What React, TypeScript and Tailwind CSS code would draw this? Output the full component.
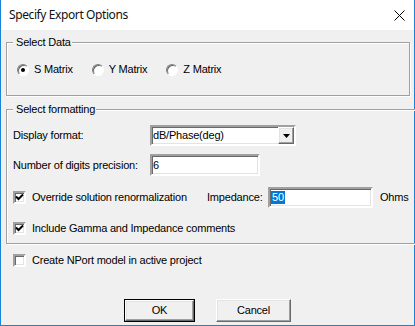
import React from 'react';

const sunken =
  'border-2 border-t-[#a0a0a0] border-l-[#a0a0a0] border-b-white border-r-white shadow-[inset_1px_1px_0_#696969,inset_-1px_-1px_0_#e3e3e3]';
const raised =
  'border border-t-white border-l-white border-b-[#696969] border-r-[#696969] shadow-[inset_-1px_-1px_0_#a0a0a0,inset_1px_1px_0_#e3e3e3]';
const groupClass =
  'mx-[5px] w-[404px] border border-[#a0a0a0] shadow-[inset_1px_1px_0_#fff,1px_1px_0_#fff] px-[6px]';
const legendClass = 'pl-[3px] pr-[1px] leading-[13px] bg-[#f0f0f0]';

function Radio({ label, checked }: { label: string; checked?: boolean }) {
  return (
    <label className="flex items-center gap-[5px] h-[13px]">
      <span className="w-[12px] h-[12px] rounded-full border-[1.5px] border-t-[#808080] border-l-[#808080] border-b-white border-r-white bg-white shadow-[inset_1px_1px_0_#696969] flex items-center justify-center">
        {checked && <span className="w-[4px] h-[4px] rounded-full bg-black" />}
      </span>
      <span>{label}</span>
    </label>
  );
}

function Check({ checked }: { checked?: boolean }) {
  return (
    <span className={`w-[13px] h-[13px] shrink-0 bg-white ${sunken} flex items-center justify-center`}>
      {checked && (
        <svg width="9" height="9" viewBox="0 0 9 9">
          <path d="M1 3.5 L3.5 6 L8 1.5" fill="none" stroke="#000" strokeWidth="2" />
        </svg>
      )}
    </span>
  );
}

export default function App() {
  return (
    <div className="w-[415px] h-[326px] border-x border-b border-[#1883d7] bg-[#f0f0f0] flex flex-col text-[11px] text-black tracking-[-0.2px] font-['Liberation_Sans',Arial,sans-serif]">
      <div className="h-[30px] bg-white flex items-center justify-between pl-[8px] pr-[9px] shrink-0">
        <span className="text-[12px] tracking-[-0.4px] font-['Noto_Sans',sans-serif] text-[#111]">
          Specify Export Options
        </span>
        <svg width="11" height="11" viewBox="0 0 11 11">
          <path d="M0.5 0.5 L10.5 10.5 M10.5 0.5 L0.5 10.5" stroke="#000" strokeWidth="1" />
        </svg>
      </div>

      <fieldset className={`${groupClass} mt-[6px] h-[60px]`}>
        <legend className={legendClass}>Select Data</legend>
        <div className="flex items-center gap-[19px] pl-[4px] pt-[14px]">
          <Radio label="S Matrix" checked />
          <Radio label="Y Matrix" />
          <Radio label="Z Matrix" />
        </div>
      </fieldset>

      <fieldset className={`${groupClass} mt-[7px] h-[141px]`}>
        <legend className={legendClass}>Select formatting</legend>
        <div className="flex flex-col pt-[9px]">
          <div className="flex items-center h-[21px]">
            <span className="w-[137px]">Display format:</span>
            <div className={`w-[146px] h-[21px] bg-white ${sunken} flex items-center justify-between pl-[1px]`}>
              <span>dB/Phase(deg)</span>
              <span className={`w-[16px] h-[17px] bg-[#f0f0f0] ${raised} flex items-center justify-center`}>
                <svg width="7" height="4" viewBox="0 0 7 4">
                  <path d="M0 0 H7 L3.5 4 Z" fill="#000" />
                </svg>
              </span>
            </div>
          </div>

          <div className="flex items-center h-[22px] mt-[8px]">
            <span className="w-[137px]">Number of digits precision:</span>
            <div className={`w-[110px] h-[22px] bg-white ${sunken} flex items-center pl-[1px]`}>6</div>
          </div>

          <div className="flex items-center h-[21px] mt-[11px]">
            <div className="w-[194px] flex items-center gap-[6px]">
              <Check checked />
              <span>Override solution renormalization</span>
            </div>
            <span className="w-[61px]">Impedance:</span>
            <div className={`w-[105px] h-[21px] bg-white ${sunken} flex items-center pl-[1px]`}>
              <span className="bg-[#0078d7] text-white px-[1px] leading-[13px]">50</span>
            </div>
            <span className="ml-[7px]">Ohms</span>
          </div>

          <div className="flex items-center gap-[6px] h-[13px] mt-[14px]">
            <Check checked />
            <span>Include Gamma and Impedance comments</span>
          </div>
        </div>
      </fieldset>

      <div className="flex items-center gap-[6px] h-[13px] mt-[10px] ml-[12px]">
        <Check />
        <span>Create NPort model in active project</span>
      </div>

      <div className="flex justify-center gap-[21px] mt-[32px]">
        <button className="w-[71px] h-[23px] border border-black bg-[#f0f0f0] p-0">
          <span className={`block w-full h-full ${raised} leading-[19px]`}>OK</span>
        </button>
        <button className={`w-[75px] h-[23px] bg-[#f0f0f0] ${raised}`}>Cancel</button>
      </div>
    </div>
  );
}
